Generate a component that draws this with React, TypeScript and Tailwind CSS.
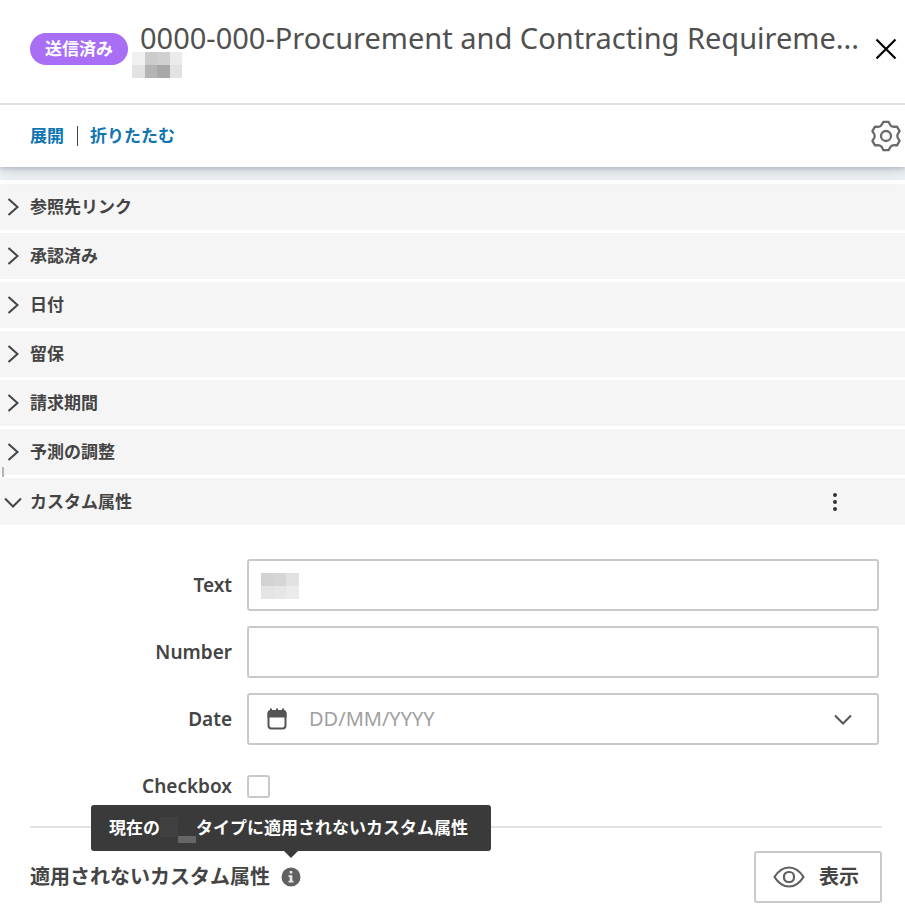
import { type ReactNode } from "react";

const sections = ["参照先リンク", "承認済み", "日付", "留保", "請求期間", "予測の調整"];

function Chevron({ open = false }: { open?: boolean }) {
  return (
    <svg width="24" height="24" viewBox="0 0 24 24" fill="none" stroke="currentColor" strokeWidth="2" aria-hidden="true">
      <path d={open ? "M4 8.5 12 16.5 20 8.5" : "M7.5 4 16.5 12 7.5 20"} />
    </svg>
  );
}

function rotate(x: number, y: number, degrees: number) {
  const a = (degrees * Math.PI) / 180;
  const rx = 16 + x * Math.cos(a) - y * Math.sin(a);
  const ry = 16 + x * Math.sin(a) + y * Math.cos(a);
  return `${rx.toFixed(2)} ${ry.toFixed(2)}`;
}

// Six identical teeth, each turned by 60 degrees.
const gearPath =
  [0, 60, 120, 180, 240, 300]
    .map((a) =>
      [
        `${a === 0 ? "M" : "L"}${rotate(-2.6, -14.2, a)}`,
        `L${rotate(2.6, -14.2, a)}`,
        `C${rotate(3.8, -11.6, a)} ${rotate(3.9, -10.9, a)} ${rotate(5.6, -9.8, a)}`,
        `C${rotate(7.3, -8.9, a)} ${rotate(8.3, -9.3, a)} ${rotate(-2.6, -14.2, a + 60)}`,
      ].join(""),
    )
    .join("") + "Z";

function GearIcon() {
  return (
    <svg width="32" height="32" viewBox="0 0 32 32" fill="none" stroke="currentColor" strokeWidth="2.300" strokeLinejoin="round" aria-hidden="true">
      <path d={gearPath} />
      <circle cx="16" cy="16" r="5" />
    </svg>
  );
}

function CalendarIcon() {
  return (
    <svg width="20" height="22" viewBox="0 0 20 22" aria-hidden="true">
      <rect x="1.5" y="3" width="17" height="17.5" rx="3" fill="none" stroke="#555" strokeWidth="2" />
      <path d="M.5 9.5V5a3 3 0 0 1 2.500-3V.5h2V2h4V.5h2V2h4V.5h2V2a3 3 0 0 1 2.500 3v4.500Z" fill="#555" />
    </svg>
  );
}

function EyeIcon() {
  return (
    <svg width="32" height="22" viewBox="0 0 32 22" fill="none" stroke="#606060" strokeWidth="2.200" aria-hidden="true">
      <path d="M1.500 11C4 7 9 1.500 16 1.500S28 7 30.500 11C28 15 23 20.500 16 20.500S4 15 1.500 11Z" strokeLinejoin="round" />
      <rect x="11" y="6" width="10" height="10" rx="4.500" />
    </svg>
  );
}

function InfoIcon() {
  return (
    <svg width="20" height="20" viewBox="0 0 20 20" aria-hidden="true">
      <circle cx="10" cy="10" r="9.500" fill="#606060" />
      <path d="M8.700 4h2.600v2.600H8.700ZM7.500 8.200h3.800v5.600h1.200v1.700H7.500v-1.700h1.200V9.900H7.500Z" fill="#e8e8e8" />
    </svg>
  );
}

function Field({ id, label, children }: { id: string; label: string; children: ReactNode }) {
  return (
    <div className="grid h-[52px] grid-cols-[232px_1fr] items-center gap-[15px] pr-[26px]">
      <label htmlFor={id} className="text-right text-[19px] leading-6 font-semibold text-[#444]">
        {label}
      </label>
      {children}
    </div>
  );
}

const box = "h-[52px] w-full rounded-[3px] border-2 border-[#c9c9c9] bg-white text-[20px] outline-none";

export default function App() {
  return (
    <main className="bg-white font-['Noto_Sans','Noto_Sans_CJK_JP',sans-serif] text-[#444]">
      <header className="relative z-10 bg-white shadow-[0_2px_4px_rgba(50,60,90,0.2),0_5px_14px_rgba(50,75,100,0.18)]">
        <div className="flex items-center border-b-2 border-[#e2e2e2] pt-5 pr-1 pb-[25px] pl-[30px]">
          <span className="flex h-8 shrink-0 items-center rounded-full bg-[#a86ef6] px-[15px] text-[17px] leading-6 font-bold text-white">
            送信済み
          </span>
          <div className="min-w-0 flex-1 pl-1">
            <h1 className="pl-2 text-[29px] leading-9 font-normal whitespace-nowrap text-[#505050]">
              0000-000-Procurement and Contracting Requireme...
            </h1>
            <div className="-mt-1 grid w-[50px] grid-cols-4" aria-hidden="true">
              <span className="h-[13px] bg-[#f0f0f0]" />
              <span className="h-[13px] bg-[#cbcbcb]" />
              <span className="h-[13px] bg-[#d0d0d0]" />
              <span className="h-[13px] bg-[#ebebeb]" />
              <span className="h-[13px] bg-[#e2e2e2]" />
              <span className="h-[13px] bg-[#b4b4b4]" />
              <span className="h-[13px] bg-[#a8a8a8]" />
              <span className="h-[13px] bg-[#e2e2e2]" />
            </div>
          </div>
          <button type="button" aria-label="閉じる" className="flex w-[30px] shrink-0 justify-center text-black">
            <svg width="22" height="22" viewBox="0 0 22 22" stroke="currentColor" strokeWidth="2.200" aria-hidden="true">
              <path d="M1.500 1.500 20.500 20.500M20.500 1.500 1.500 20.500" />
            </svg>
          </button>
        </div>
        <div className="flex h-[62px] items-center pr-[3px] pl-[30px] text-[17px] leading-6 font-bold text-[#0f75b3]">
          <button type="button">展開</button>
          <span className="mr-3 ml-[13px] h-5 w-px bg-[#444]" />
          <button type="button">折りたたむ</button>
          <button type="button" aria-label="設定" className="ml-auto text-[#6a6a6a]">
            <GearIcon />
          </button>
        </div>
      </header>

      <div className="h-[13px] bg-[#f1f3f5]" />
      <div className="flex flex-col gap-[3px] pt-1">
        {sections.map((name) => (
          <section key={name} className="relative bg-[#f5f5f5]">
            <button type="button" aria-expanded="false" className="flex h-[46px] w-full items-center gap-[5px] pl-px text-[17px] leading-6 font-bold">
              <Chevron />
              {name}
            </button>
            {name === "予測の調整" && <span className="absolute -bottom-0.5 left-0.5 h-[10px] w-[2px] bg-[#b5b5b5]" />}
          </section>
        ))}
        <section>
          <div className="flex h-[47px] items-center bg-[#f5f5f5] pr-[58px]">
            <button type="button" aria-expanded="true" className="flex flex-1 items-center gap-[5px] pl-px text-[17px] leading-6 font-bold">
              <Chevron open />
              カスタム属性
            </button>
            <button type="button" aria-label="メニュー" className="flex w-6 justify-center">
              <svg width="4" height="18" viewBox="0 0 4 18" fill="#333" aria-hidden="true">
                <circle cx="2" cy="2" r="2" />
                <circle cx="2" cy="9" r="2" />
                <circle cx="2" cy="16" r="2" />
              </svg>
            </button>
          </div>

          <form className="flex flex-col gap-[15px] pt-[34px]">
            <Field id="text" label="Text">
              <div className="relative">
                <input id="text" type="text" className={`${box} px-3`} />
                <div className="pointer-events-none absolute top-[14px] left-[14px] grid w-[38px] grid-cols-3" aria-hidden="true">
                  <span className="h-[13px] bg-[#d3d3d3]" />
                  <span className="h-[13px] bg-[#d6d6d6]" />
                  <span className="h-[13px] bg-[#e2e2e2]" />
                  <span className="h-[13px] bg-[#e4e4e4]" />
                  <span className="h-[13px] bg-[#e6e6e6]" />
                  <span className="h-[13px] bg-[#ebebeb]" />
                </div>
              </div>
            </Field>
            <Field id="number" label="Number">
              <input id="number" type="text" inputMode="numeric" className={`${box} px-3`} />
            </Field>
            <Field id="date" label="Date">
              <div className={`${box} flex items-center pr-[22px] pl-[18px]`}>
                <CalendarIcon />
                <input
                  id="date"
                  type="text"
                  placeholder="DD/MM/YYYY"
                  className="ml-[22px] min-w-0 flex-1 outline-none placeholder:text-[#a0a0a0]"
                />
                <button type="button" aria-label="日付を選択" className="text-[#555]">
                  <Chevron open />
                </button>
              </div>
            </Field>
            <Field id="checkbox" label="Checkbox">
              <input id="checkbox" type="checkbox" className="size-[23px] appearance-none rounded-[3px] border-2 border-[#c9c9c9] bg-white" />
            </Field>
          </form>
        </section>
      </div>

      <footer className="mt-[14px] mr-[23px] ml-[30px] flex items-center border-t-2 border-[#e4e4e4] pt-[23px]">
        <h2 className="text-[20px] leading-6 font-bold">適用されないカスタム属性</h2>
        <div className="relative ml-[11px] size-5">
          <button type="button" aria-label="情報" aria-describedby="hint" className="block">
            <InfoIcon />
          </button>
          <div
            id="hint"
            role="tooltip"
            className="absolute bottom-full left-1/2 mb-4 flex h-[46px] w-[400px] -translate-x-1/2 items-center rounded-[3px] bg-[#3a3a3a] pl-[18px] text-[17px] leading-6 font-bold whitespace-nowrap text-white"
          >
            現在の
            <span className="mt-3 h-5 w-[18px] self-start bg-[#404040]" />
            <span className="mb-2 h-[7px] w-[18px] self-end bg-[#666]" />
            タイプに適用されないカスタム属性
            <span className="absolute top-full left-1/2 -translate-x-1/2 border-x-[7px] border-t-[7px] border-x-transparent border-t-[#3a3a3a]" />
          </div>
        </div>
        <button
          type="button"
          className="ml-auto flex h-[52px] w-32 items-center justify-center gap-[14px] rounded-[3px] border-2 border-[#c9c9c9] pr-1 text-[20px] leading-6 font-bold"
        >
          <EyeIcon />
          表示
        </button>
      </footer>
    </main>
  );
}
